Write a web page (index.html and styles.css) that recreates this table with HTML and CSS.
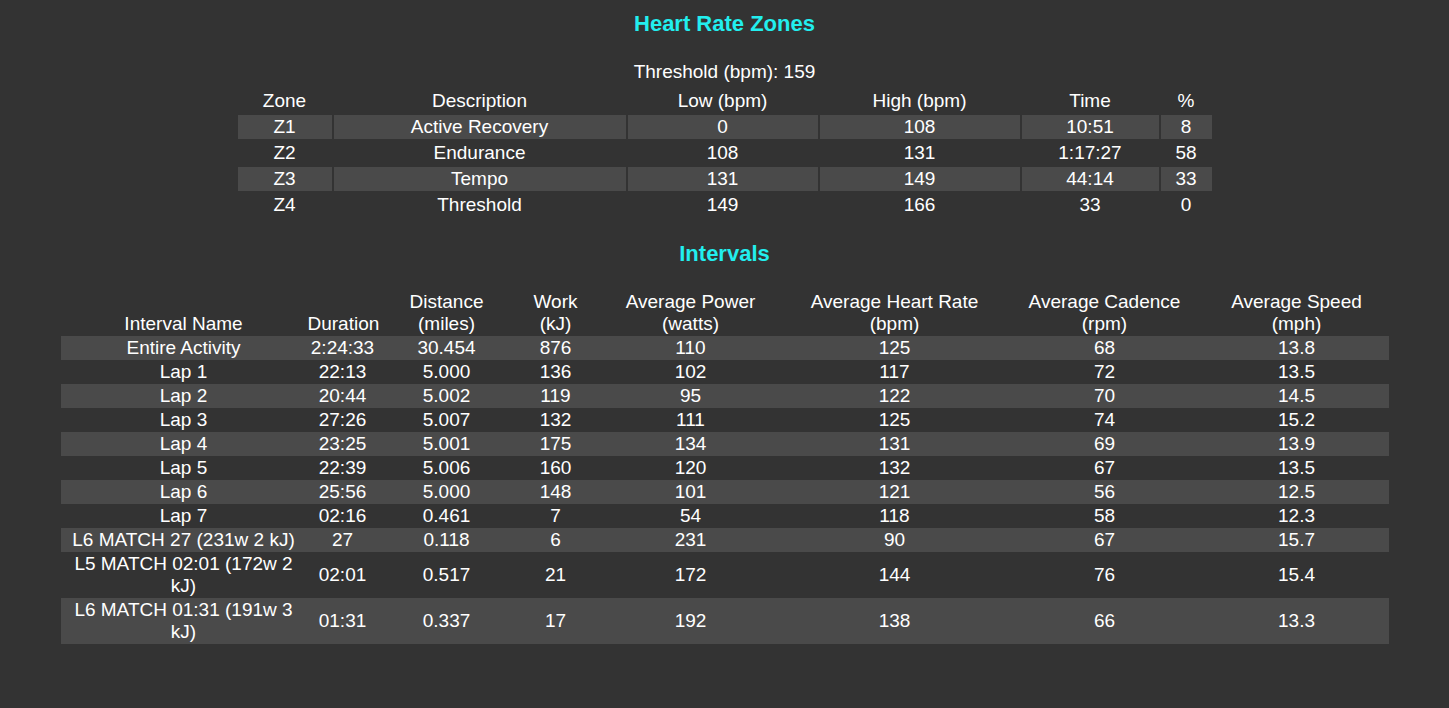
FILE: index.html
```html
<!DOCTYPE html>
<html>
<head>
<meta charset="utf-8">
<link rel="stylesheet" href="styles.css">
</head>
<body>
<div class="page">
  <h3 class="title title-zones">Heart Rate Zones</h3>
  <div class="threshold">Threshold (bpm): 159</div>
  <table class="zones">
    <colgroup>
      <col class="z-c1"><col class="z-c2"><col class="z-c3"><col class="z-c4"><col class="z-c5"><col class="z-c6">
    </colgroup>
    <thead>
      <tr><th>Zone</th><th>Description</th><th>Low (bpm)</th><th>High (bpm)</th><th>Time</th><th>%</th></tr>
    </thead>
    <tbody>
      <tr><td>Z1</td><td>Active Recovery</td><td>0</td><td>108</td><td>10:51</td><td>8</td></tr>
      <tr><td>Z2</td><td>Endurance</td><td>108</td><td>131</td><td>1:17:27</td><td>58</td></tr>
      <tr><td>Z3</td><td>Tempo</td><td>131</td><td>149</td><td>44:14</td><td>33</td></tr>
      <tr><td>Z4</td><td>Threshold</td><td>149</td><td>166</td><td>33</td><td>0</td></tr>
    </tbody>
  </table>

  <h3 class="title title-intervals">Intervals</h3>
  <table class="intervals">
    <colgroup>
      <col class="i-c1"><col class="i-c2"><col class="i-c3"><col class="i-c4"><col class="i-c5"><col class="i-c6"><col class="i-c7"><col class="i-c8">
    </colgroup>
    <thead>
      <tr>
        <th>Interval Name</th>
        <th>Duration</th>
        <th>Distance<br>(miles)</th>
        <th>Work<br>(kJ)</th>
        <th>Average Power<br>(watts)</th>
        <th>Average Heart Rate<br>(bpm)</th>
        <th>Average Cadence<br>(rpm)</th>
        <th>Average Speed<br>(mph)</th>
      </tr>
    </thead>
    <tbody>
      <tr><td>Entire Activity</td><td>2:24:33</td><td>30.454</td><td>876</td><td>110</td><td>125</td><td>68</td><td>13.8</td></tr>
      <tr><td>Lap 1</td><td>22:13</td><td>5.000</td><td>136</td><td>102</td><td>117</td><td>72</td><td>13.5</td></tr>
      <tr><td>Lap 2</td><td>20:44</td><td>5.002</td><td>119</td><td>95</td><td>122</td><td>70</td><td>14.5</td></tr>
      <tr><td>Lap 3</td><td>27:26</td><td>5.007</td><td>132</td><td>111</td><td>125</td><td>74</td><td>15.2</td></tr>
      <tr><td>Lap 4</td><td>23:25</td><td>5.001</td><td>175</td><td>134</td><td>131</td><td>69</td><td>13.9</td></tr>
      <tr><td>Lap 5</td><td>22:39</td><td>5.006</td><td>160</td><td>120</td><td>132</td><td>67</td><td>13.5</td></tr>
      <tr><td>Lap 6</td><td>25:56</td><td>5.000</td><td>148</td><td>101</td><td>121</td><td>56</td><td>12.5</td></tr>
      <tr><td>Lap 7</td><td>02:16</td><td>0.461</td><td>7</td><td>54</td><td>118</td><td>58</td><td>12.3</td></tr>
      <tr><td>L6 MATCH 27 (231w 2 kJ)</td><td>27</td><td>0.118</td><td>6</td><td>231</td><td>90</td><td>67</td><td>15.7</td></tr>
      <tr><td>L5 MATCH 02:01 (172w 2 kJ)</td><td>02:01</td><td>0.517</td><td>21</td><td>172</td><td>144</td><td>76</td><td>15.4</td></tr>
      <tr><td>L6 MATCH 01:31 (191w 3 kJ)</td><td>01:31</td><td>0.337</td><td>17</td><td>192</td><td>138</td><td>66</td><td>13.3</td></tr>
    </tbody>
  </table>
</div>
</body>
</html>
```

FILE: styles.css
```css
html, body {
  margin: 0;
  padding: 0;
  background: #333333;
}

body {
  font-family: "Liberation Sans", Arial, sans-serif;
  font-size: 19px;
  color: #ffffff;
  height: 708px;
  overflow: hidden;
}

.page {
  padding-top: 11px;
}

.title {
  margin: 0;
  text-align: center;
  color: #22eeee;
  font-size: 22px;
  font-weight: bold;
  line-height: 26px;
}

.threshold {
  margin-top: 24px;
  text-align: center;
  line-height: 22px;
}

table {
  margin-left: auto;
  margin-right: auto;
  table-layout: fixed;
  font-size: 19px;
  color: #ffffff;
}

th, td {
  padding: 1px;
  line-height: 22px;
  text-align: center;
  font-weight: normal;
}

.zones {
  margin-top: 4px;
  border-spacing: 2px;
}

.zones tbody tr:nth-child(odd) td {
  background: #4a4a4a;
}

.z-c1 { width: 94px; }
.z-c2 { width: 292px; }
.z-c3 { width: 190px; }
.z-c4 { width: 200px; }
.z-c5 { width: 137px; }
.z-c6 { width: 51px; }

.title-intervals {
  margin-top: 22px;
}

.intervals {
  margin-top: 23px;
  border-spacing: 0;
  width: 1328px;
}

.intervals th {
  vertical-align: bottom;
}

.intervals tbody tr:nth-child(odd) td {
  background: #4a4a4a;
}

.i-c1 { width: 246px; }
.i-c2 { width: 72px; }
.i-c3 { width: 136px; }
.i-c4 { width: 82px; }
.i-c5 { width: 188px; }
.i-c6 { width: 220px; }
.i-c7 { width: 200px; }
.i-c8 { width: 184px; }
```
